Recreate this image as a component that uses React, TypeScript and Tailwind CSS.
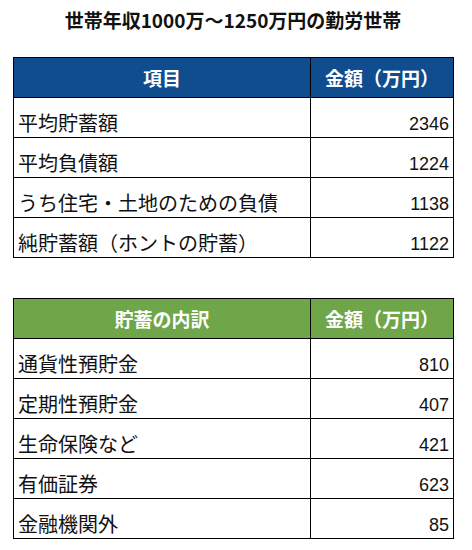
import React from "react";

type Row = { label: string; value: string };

const debtRows: Row[] = [
  { label: "平均貯蓄額", value: "2346" },
  { label: "平均負債額", value: "1224" },
  { label: "うち住宅・土地のための負債", value: "1138" },
  { label: "純貯蓄額（ホントの貯蓄）", value: "1122" },
];

const savingRows: Row[] = [
  { label: "通貨性預貯金", value: "810" },
  { label: "定期性預貯金", value: "407" },
  { label: "生命保険など", value: "421" },
  { label: "有価証券", value: "623" },
  { label: "金融機関外", value: "85" },
];

const jp = "font-['Noto_Sans_CJK_JP',sans-serif]";
const num = "font-['Liberation_Sans','Noto_Sans_CJK_JP',sans-serif]";

const DataTable: React.FC<{ title: string; headerBg: string; rows: Row[] }> = ({
  title,
  headerBg,
  rows,
}) => (
  <table className="w-[440px] border-collapse border border-black table-fixed">
    <colgroup>
      <col className="w-[297px]" />
      <col className="w-[143px]" />
    </colgroup>
    <thead>
      <tr className={`h-[40px] ${headerBg}`}>
        <th className={`border border-black text-white text-[19px] font-bold text-center align-middle leading-[26px] ${jp}`}>
          {title}
        </th>
        <th className={`border border-black text-white text-[19px] font-bold text-center align-middle leading-[26px] ${jp}`}>
          金額（万円）
        </th>
      </tr>
    </thead>
    <tbody>
      {rows.map((r) => (
        <tr key={r.label} className="h-[40px]">
          <td className={`border border-black align-bottom pl-[4px] pb-[1px] text-[20px] leading-[26px] text-[#111] ${jp}`}>
            {r.label}
          </td>
          <td className={`border border-black align-bottom text-right pr-[4px] pb-[2px] text-[18px] leading-[22px] text-[#111] ${num}`}>
            {r.value}
          </td>
        </tr>
      ))}
    </tbody>
  </table>
);

export default function App() {
  return (
    <div className="w-[472px] h-[550px] bg-white pl-[13px] pt-[6px]">
      <h1 className={`w-[440px] text-center text-[19px] font-bold leading-[28px] text-[#111] ${jp}`}>
        世帯年収1000万～1250万円の勤労世帯
      </h1>
      <div className="mt-[23px] flex flex-col gap-[40px]">
        <DataTable title="項目" headerBg="bg-[#0f4d8f]" rows={debtRows} />
        <DataTable title="貯蓄の内訳" headerBg="bg-[#6fa64a]" rows={savingRows} />
      </div>
    </div>
  );
}
